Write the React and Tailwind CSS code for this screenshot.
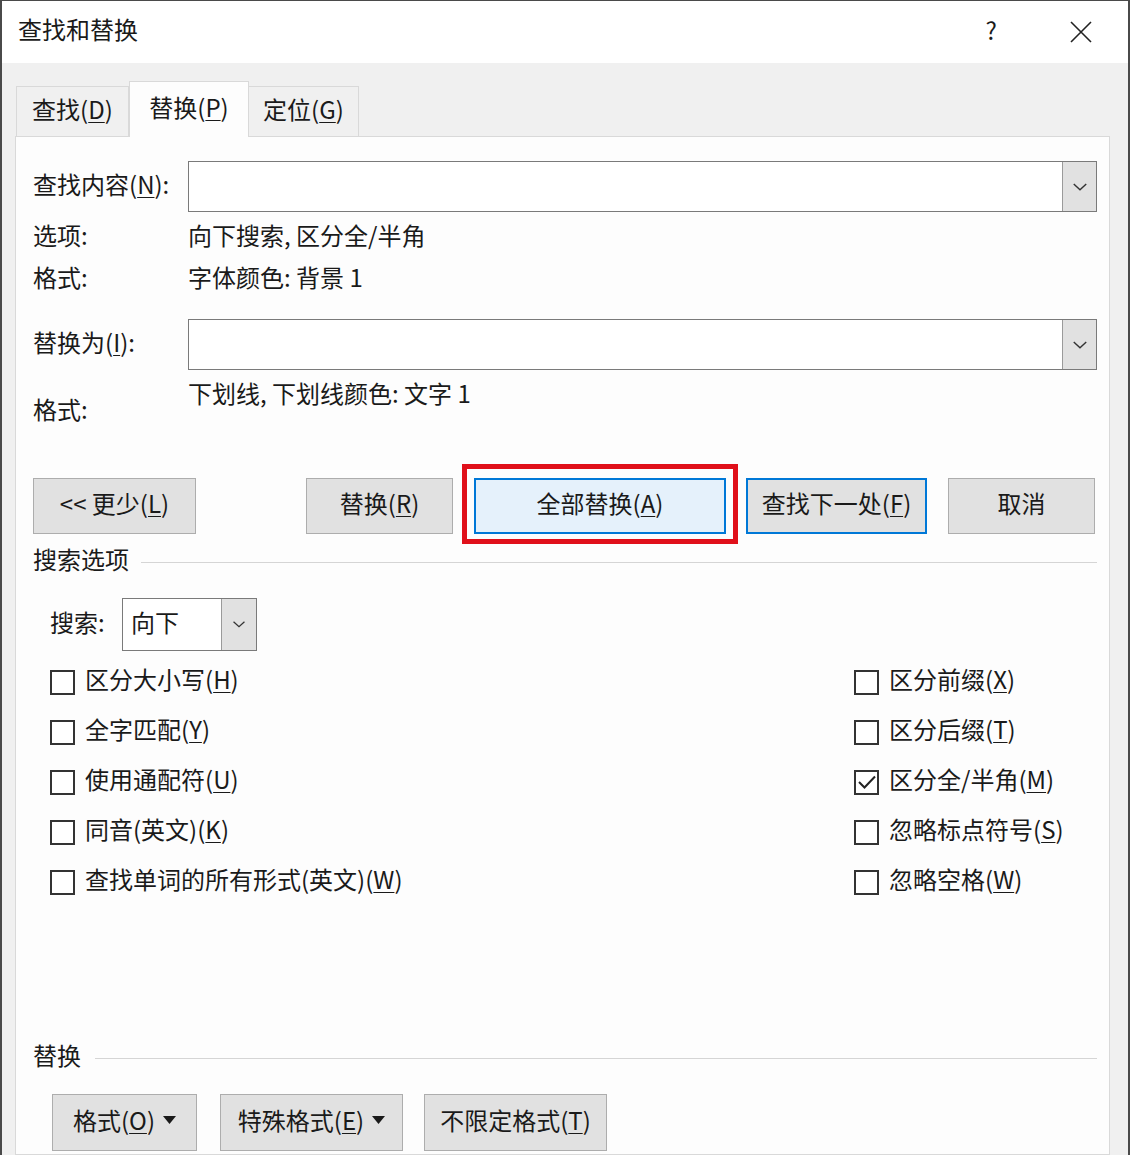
import React from "react";

const font = { fontFamily: '"Noto Sans CJK SC", "Noto Sans", sans-serif' };

// Noto CJK sits a little low compared with the original UI font
const T = ({ children, className = "" }) => (
    <span className={`relative -top-[3px] ${className}`}>{children}</span>
);

const Key = ({ k }) => (
    <>(<u className="underline-offset-[3px] decoration-1">{k}</u>)</>
);

const Chevron = ({ size = 16 }) => (
    <svg width={size} height={size * 0.6} viewBox="0 0 16 10" fill="none">
        <path d="M1.5 2 L8 8 L14.5 2" stroke="#333" strokeWidth="1.5"/>
    </svg>
);

const Caret = () => (
    <svg width="13" height="8" viewBox="0 0 13 8" className="ml-2">
        <path d="M0 0 H13 L6.5 8 Z" fill="#1a1a1a"/>
    </svg>
);

const Box = ({ checked }) => (
    <div className="w-[25px] h-[25px] border-2 border-[#333] bg-white flex items-center justify-center shrink-0">
        {checked && (
            <svg width="20" height="16" viewBox="0 0 20 16" fill="none">
                <path d="M2 8 L7.5 13.5 L18 2.5" stroke="#222" strokeWidth="2"/>
            </svg>
        )}
    </div>
);

const Check = ({ checked, children }) => (
    <div className="h-[50px] flex items-center gap-[10px]">
        <Box checked={checked}/>
        <T>{children}</T>
    </div>
);

const Field = ({ label, mt }) => (
    <div className={`flex h-[51px] ${mt}`}>
        <div className="w-[155px] shrink-0 flex items-center"><T>{label}</T></div>
        <div className="flex-1 flex border border-[#7a7a7a] bg-white">
            <div className="flex-1"/>
            <div className="w-[34px] bg-[#e1e1e1] border-l border-[#9a9a9a] flex items-center justify-center">
                <Chevron/>
            </div>
        </div>
    </div>
);

const Btn = ({ w, h = "h-[56px]", className = "", children }) => (
    <div className={`flex items-center justify-center border border-[#adadad] bg-[#e1e1e1] ${w} ${h} ${className}`}>
        <T className="flex items-center">{children}</T>
    </div>
);

const Section = ({ title, mt, lineGap }) => (
    <div className={`h-[28px] flex items-center ${mt}`}>
        <T>{title}</T>
        <div className={`flex-1 h-px bg-[#d5d5d5] ${lineGap}`}/>
    </div>
);

export default function App() {
    return (
        <div style={font} className="w-[1130px] h-[1155px] overflow-hidden flex flex-col border-x-2 border-t border-[#4a4a4a] bg-[#f0f0f0] text-[24px] text-[#1a1a1a] leading-none">
            {/* title bar */}
            <div className="h-[62px] bg-white flex items-center pl-[16px] shrink-0">
                <T>查找和替换</T>
                <span className="ml-auto mr-[73px] text-[24px] relative -top-[2px]">?</span>
                <svg width="22" height="22" viewBox="0 0 22 22" className="mr-[36px]">
                    <path d="M1 1 L21 21 M21 1 L1 21" stroke="#222" strokeWidth="1.6"/>
                </svg>
            </div>

            <div className="flex-1 flex flex-col pl-[13px] pr-[18px]">
                {/* tabs */}
                <div className="flex items-end h-[73px] pl-[1px]">
                    <div className="w-[113px] h-[50px] border border-b-0 border-[#d9d9d9] flex items-center justify-center">
                        <T>查找<Key k="D"/></T>
                    </div>
                    <div className="w-[120px] h-[56px] border border-b-0 border-[#d9d9d9] bg-[#fdfdfd] flex items-center justify-center -mb-px relative z-10">
                        <T>替换<Key k="P"/></T>
                    </div>
                    <div className="w-[110px] h-[50px] border border-b-0 border-l-0 border-[#d9d9d9] flex items-center justify-center">
                        <T>定位<Key k="G"/></T>
                    </div>
                </div>

                {/* panel */}
                <div className="flex-1 bg-[#fdfdfd] border border-[#d9d9d9] pl-[17px] pr-[12px] flex flex-col">
                    <Field label={<>查找内容<Key k="N"/>:</>} mt="mt-[24px]"/>
                    <div className="flex items-center h-[42px] mt-[5px]">
                        <div className="w-[155px]"><T>选项:</T></div>
                        <T>向下搜索, 区分全/半角</T>
                    </div>
                    <div className="flex items-center h-[42px]">
                        <div className="w-[155px]"><T>格式:</T></div>
                        <T>字体颜色: 背景 1</T>
                    </div>

                    <Field label={<>替换为<Key k="I"/>:</>} mt="mt-[18px]"/>
                    <div className="flex h-[60px]">
                        <div className="w-[155px] mt-[30px]"><T>格式:</T></div>
                        <div className="mt-[14px]"><T>下划线, 下划线颜色: 文字 1</T></div>
                    </div>

                    {/* buttons */}
                    <div className="flex mt-[48px]">
                        <Btn w="w-[163px]">&lt;&lt; 更少<Key k="L"/></Btn>
                        <Btn w="w-[147px]" className="ml-[110px]">替换<Key k="R"/></Btn>
                        <div className="ml-[21px] relative">
                            <div className="absolute -left-[12px] -top-[14px] -right-[12px] -bottom-[10px] border-[5px] border-[#e0101a] pointer-events-none"/>
                            <Btn w="w-[252px]" className="!bg-[#e5f1fb] !border-2 !border-[#0078d7]">全部替换<Key k="A"/></Btn>
                        </div>
                        <Btn w="w-[181px]" className="ml-[20px] !border-2 !border-[#0078d7]">查找下一处<Key k="F"/></Btn>
                        <Btn w="w-[147px]" className="ml-[21px]">取消</Btn>
                    </div>

                    <Section title="搜索选项" mt="mt-[14px]" lineGap="ml-[12px]"/>

                    <div className="flex items-center mt-[22px] pl-[17px]">
                        <span className="w-[72px]"><T>搜索:</T></span>
                        <div className="flex h-[53px] w-[135px] border border-[#7a7a7a] bg-white">
                            <div className="flex-1 flex items-center pl-[8px]"><T>向下</T></div>
                            <div className="w-[35px] bg-[#e1e1e1] border-l border-[#9a9a9a] flex items-center justify-center">
                                <Chevron size={14}/>
                            </div>
                        </div>
                    </div>

                    <div className="flex mt-[6px] pl-[17px]">
                        <div className="w-[804px] flex flex-col">
                            <Check>区分大小写<Key k="H"/></Check>
                            <Check>全字匹配<Key k="Y"/></Check>
                            <Check>使用通配符<Key k="U"/></Check>
                            <Check>同音(英文)<Key k="K"/></Check>
                            <Check>查找单词的所有形式(英文)<Key k="W"/></Check>
                        </div>
                        <div className="flex flex-col">
                            <Check>区分前缀<Key k="X"/></Check>
                            <Check>区分后缀<Key k="T"/></Check>
                            <Check checked>区分全/半角<Key k="M"/></Check>
                            <Check>忽略标点符号<Key k="S"/></Check>
                            <Check>忽略空格<Key k="W"/></Check>
                        </div>
                    </div>

                    <Section title="替换" mt="mt-[137px]" lineGap="ml-[14px]"/>

                    <div className="flex mt-[22px] pl-[19px]">
                        <Btn w="w-[145px]" h="h-[57px]">格式<Key k="O"/><Caret/></Btn>
                        <Btn w="w-[183px]" h="h-[57px]" className="ml-[23px]">特殊格式<Key k="E"/><Caret/></Btn>
                        <Btn w="w-[183px]" h="h-[57px]" className="ml-[21px]">不限定格式<Key k="T"/></Btn>
                    </div>
                </div>
            </div>
        </div>
    );
}
